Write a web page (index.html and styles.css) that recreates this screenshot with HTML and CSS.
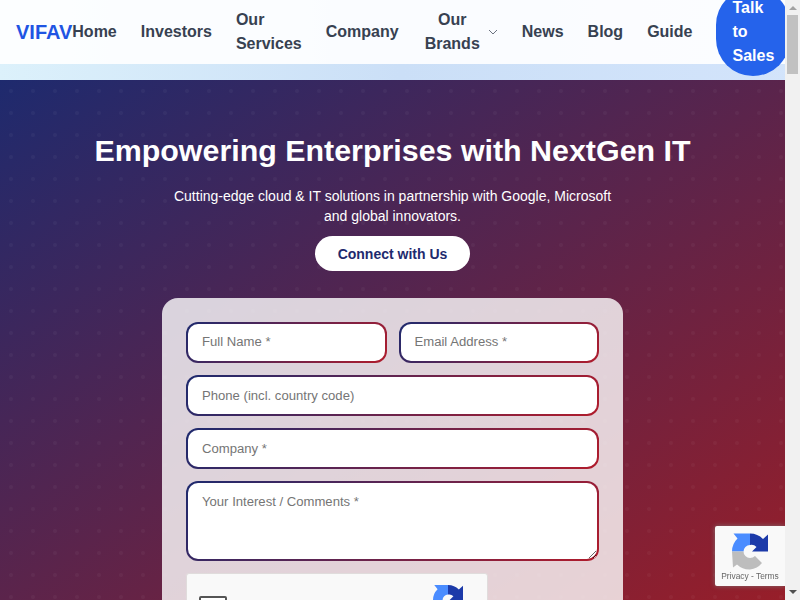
FILE: index.html
```html
<!DOCTYPE html>
<html lang="en">
<head>
    <meta charset="UTF-8">
    <meta name="viewport" content="width=device-width, initial-scale=1.0">
    <title>VIFAV</title>
    <link rel="stylesheet" href="styles.css">
</head>
<body>

    <header class="main-header">
        <a class="logo" href="#">VIFAV</a>
        <nav class="navbar">
            <a href="#">Home</a>
            <a href="#">Investors</a>
            <a href="#">Our Services</a>
            <a href="#">Company</a>
            <a class="has-menu" href="#">
                <span>Our Brands</span>
                <svg class="chevron" viewBox="0 0 10 6" width="10" height="6"><path d="M1 1l4 4 4-4" fill="none" stroke="#6b7280" stroke-width="1"/></svg>
            </a>
            <a href="#">News</a>
            <a href="#">Blog</a>
            <a href="#">Guide</a>
        </nav>
        <a class="sales-btn" href="#">Talk to Sales</a>
    </header>

    <section class="hero">
        <h1>Empowering Enterprises with NextGen IT</h1>
        <p>Cutting-edge cloud &amp; IT solutions in partnership with Google, Microsoft and global innovators.</p>
        <a class="connect-btn" href="#">Connect with Us</a>

        <form class="contact-card">
            <div class="field-row">
                <input class="field" type="text" placeholder="Full Name *">
                <input class="field" type="email" placeholder="Email Address *">
            </div>
            <input class="field" type="tel" placeholder="Phone (incl. country code)">
            <input class="field" type="text" placeholder="Company *">
            <textarea class="field comments" placeholder="Your Interest / Comments *"></textarea>
            <div class="captcha">
                <span class="captcha-box"></span>
                <span class="captcha-label">I'm not a robot</span>
                <div class="captcha-brand">
                    <svg viewBox="0 0 36 36" width="30" height="30">
                        <path fill="#4a8cff" d="M18 0V11.5A6.5 6.5 0 0 0 11.5 18H0A18 18 0 0 1 5.5 5L1.5 0Z"/>
                        <path fill="#1c3aa9" d="M18 0A18 18 0 0 1 31 5.5L36 1V18H20L24.5 13.5A7 7 0 0 0 18 11.5Z"/>
                        <path fill="#bdbdbd" d="M0 18H11.5A6.5 6.5 0 0 0 18 24.5A7 7 0 0 0 23 22.5L30 29.5A18 18 0 0 1 18 36A18 18 0 0 1 5 31L1 34Z"/>
                    </svg>
                    <span>reCAPTCHA</span>
                </div>
            </div>
            <button class="submit-btn" type="button">Submit</button>
        </form>
    </section>

    <div class="captcha-badge">
        <svg viewBox="0 0 36 36" width="36" height="37">
            <path fill="#4a8cff" d="M18 0V11.5A6.5 6.5 0 0 0 11.5 18H0A18 18 0 0 1 5.5 5L1.5 0Z"/>
            <path fill="#1c3aa9" d="M18 0A18 18 0 0 1 31 5.5L36 1V18H20L24.5 13.5A7 7 0 0 0 18 11.5Z"/>
            <path fill="#bdbdbd" d="M0 18H11.5A6.5 6.5 0 0 0 18 24.5A7 7 0 0 0 23 22.5L30 29.5A18 18 0 0 1 18 36A18 18 0 0 1 5 31L1 34Z"/>
        </svg>
        <span>Privacy - Terms</span>
    </div>

    <div class="scroll-bar">
        <span class="arrow-up"></span>
        <span class="scroll-thumb"></span>
        <span class="arrow-down"></span>
    </div>

</body>
</html>
```

FILE: styles.css
```css
html {
    overflow-x: hidden;
}

body {
    margin: 0 15px 0 0;
    padding: 0;
    font-family: "Liberation Sans", Arial, sans-serif;
    font-size: 16px;
    line-height: 24px;
    background: linear-gradient(90deg, #dcf1fb, #cbdff7 50%, #d3e4fb);
}

a {
    text-decoration: none;
}

.main-header {
    display: flex;
    justify-content: space-between;
    align-items: center;
    height: 64px;
    padding: 0 16px;
    margin-bottom: 16px;
    background-color: rgba(255, 255, 255, 0.9);
}

.logo {
    color: #1f55e3;
    font-size: 20px;
    font-weight: bold;
}

.navbar {
    display: flex;
    align-items: center;
    gap: 24px;
    margin-right: 24px;
}

.navbar a {
    color: #374151;
    font-weight: bold;
}

.has-menu {
    display: flex;
    align-items: center;
    gap: 8px;
    padding-left: 2px;
    text-align: center;
}

.chevron {
    flex-shrink: 0;
}

.sales-btn {
    padding: 8px 16px;
    margin-top: -1px;
    color: white;
    font-weight: bold;
    background-color: #2563eb;
    border-radius: 9999px;
}

.hero {
    display: flex;
    flex-direction: column;
    align-items: center;
    padding: 48px 16px 56px;
    color: white;
    text-align: center;
    background-color: #1e2a6e;
    background-image:
        radial-gradient(circle, rgba(255, 255, 255, 0.035) 1.5px, transparent 2.5px),
        linear-gradient(147deg, #1e2a6e, #ac1c1d);
    background-size: 22px 22px, 100% 100%;
}

.hero h1 {
    margin: 0 0 14px;
    font-size: 30.4px;
    line-height: 44px;
}

.hero p {
    width: 448px;
    margin: 0 0 10px;
    font-size: 14px;
    line-height: 20px;
}

.connect-btn {
    padding: 8px 23px 7px;
    margin-bottom: 27px;
    color: #1e2a6e;
    font-size: 14px;
    line-height: 20px;
    font-weight: bold;
    background-color: white;
    border-radius: 18px;
}

.contact-card {
    display: flex;
    flex-direction: column;
    gap: 12px;
    box-sizing: border-box;
    width: 461px;
    padding: 24px;
    background-color: rgba(255, 255, 255, 0.8);
    border-radius: 16px;
}

.field-row {
    display: flex;
    gap: 12px;
}

.field {
    display: block;
    box-sizing: border-box;
    width: 100%;
    min-width: 0;
    height: 41px;
    padding: 10px 14px;
    font-family: inherit;
    font-size: 13.12px;
    color: #333;
    border: 2px solid transparent;
    border-radius: 12px;
    background:
        linear-gradient(white, white) padding-box,
        linear-gradient(135deg, #1e2a6e, #b01c2c) border-box;
    outline: none;
}

.field-row .field {
    padding-top: 9px;
    padding-bottom: 11px;
}

.field::placeholder {
    color: #757575;
}

.comments {
    height: 80px;
    padding-top: 11px;
    resize: vertical;
}

.captcha {
    display: flex;
    align-items: flex-start;
    box-sizing: border-box;
    width: 302px;
    height: 78px;
    padding: 22px 11px 0 12px;
    color: #333;
    background-color: #f9f9f9;
    border: 1px solid #e0dcdc;
    border-radius: 3px;
}

.captcha-box {
    width: 24px;
    height: 24px;
    background-color: white;
    border: 2px solid #555;
    border-radius: 2px;
}

.captcha-label {
    margin: 4px 0 0 12px;
    font-size: 14px;
}

.captcha-brand {
    display: flex;
    flex-direction: column;
    align-items: center;
    margin: -11px 0 0 auto;
    color: #555;
    font-size: 10px;
    line-height: 14px;
}

.submit-btn {
    padding: 10px;
    color: white;
    font-family: inherit;
    font-size: 16px;
    font-weight: bold;
    background-color: #2563eb;
    border: none;
    border-radius: 12px;
}

.captcha-badge {
    position: fixed;
    right: 15px;
    bottom: 14px;
    display: flex;
    flex-direction: column;
    align-items: center;
    box-sizing: border-box;
    width: 70px;
    height: 60px;
    padding-top: 7px;
    color: #666;
    font-size: 8.4px;
    line-height: 12px;
    background-color: #f9f9f9;
    border-radius: 2px 0 0 2px;
    box-shadow: 0 0 5px rgba(128, 128, 128, 0.8);
}

.scroll-bar {
    position: fixed;
    top: 0;
    right: 0;
    bottom: 0;
    display: flex;
    flex-direction: column;
    align-items: center;
    width: 15px;
    background-color: #f1f1f1;
}

.arrow-up {
    margin: 6px 0 5px;
    border: 4px solid transparent;
    border-top: none;
    border-bottom-color: #a3a3a3;
}

.scroll-thumb {
    width: 11px;
    height: 59px;
    background-color: #c1c1c1;
}

.arrow-down {
    margin: auto 0 6px;
    border: 4px solid transparent;
    border-bottom: none;
    border-top-color: #505050;
}
```
